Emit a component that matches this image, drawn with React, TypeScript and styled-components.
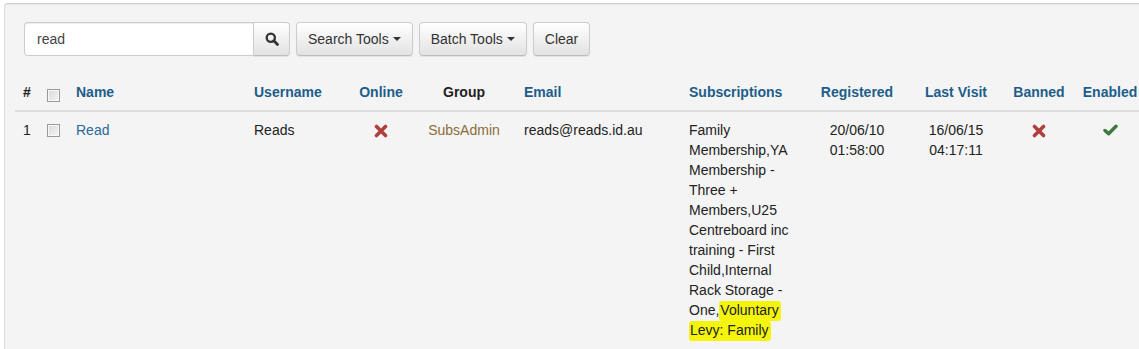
import React from "react";
import styled, { createGlobalStyle } from "styled-components";

const Global = createGlobalStyle`
  html, body { margin: 0; padding: 0; overflow: hidden; background: #fff; }
  body { font-family: "Liberation Sans", Arial, sans-serif; font-size: 14px; line-height: 20px; color: #222; }
`;

const Well = styled.div`
  margin: 3px -40px 0 4px;
  min-height: 400px;
  background: #f4f4f4;
  border: 1px solid #dadada;
  border-top-color: #cdcdcd;
  border-radius: 4px;
  box-shadow: inset 0 1px 1px rgba(0, 0, 0, 0.05);
  padding: 18px 0 0 10px;
`;

const Toolbar = styled.div`
  display: flex;
  align-items: stretch;
  gap: 6px;
  margin: 0 0 18px 9px;
  height: 34px;
`;

const InputGroup = styled.div`
  display: flex;
  height: 34px;
`;

const SearchInput = styled.input`
  box-sizing: border-box;
  width: 229px;
  height: 34px;
  padding: 6px 12px;
  border: 1px solid #ccc;
  border-right: none;
  border-radius: 4px 0 0 4px;
  background: #fff;
  font: inherit;
  color: #444;
  box-shadow: inset 0 1px 1px rgba(0, 0, 0, 0.075);
  outline: none;
`;

const Btn = styled.button<{ $attached?: boolean }>`
  box-sizing: border-box;
  flex-shrink: 0;
  height: 34px;
  display: flex;
  align-items: center;
  justify-content: center;
  gap: 4px;
  padding: ${(p) => (p.$attached ? "0" : "6px 11px")};
  font: inherit;
  color: #333;
  background: linear-gradient(to bottom, #ffffff 0%, #e2e2e2 100%);
  border: 1px solid #ccc;
  border-bottom-color: #bdbdbd;
  border-radius: ${(p) => (p.$attached ? "0 4px 4px 0" : "4px")};
  box-shadow: inset 0 1px 0 rgba(255, 255, 255, 0.15), 0 1px 1px rgba(0, 0, 0, 0.075);
  width: ${(p) => (p.$attached ? "37px" : "auto")};
  cursor: pointer;
`;

const Caret = styled.span`
  display: inline-block;
  width: 0;
  height: 0;
  border-top: 4px solid #333;
  border-left: 4px solid transparent;
  border-right: 4px solid transparent;
`;

const Table = styled.table`
  border-collapse: collapse;
  table-layout: fixed;
  width: 1135px;
`;

const Th = styled.th<{ $w: number; $center?: boolean; $plain?: boolean; $tight?: boolean }>`
  width: ${(p) => p.$w}px;
  box-sizing: border-box;
  padding: ${(p) => (p.$tight ? "8px 2px" : "8px")};
  text-align: ${(p) => (p.$center ? "center" : "left")};
  font-weight: bold;
  color: ${(p) => (p.$plain ? "#222" : "#1d5d8a")};
  border-bottom: 2px solid #dddddd;
  vertical-align: bottom;
  white-space: nowrap;
`;

const Td = styled.td<{ $center?: boolean; $tight?: boolean }>`
  padding: ${(p) => (p.$tight ? "8px 2px" : "8px")};
  text-align: ${(p) => (p.$center ? "center" : "left")};
  vertical-align: top;
`;

const Check = styled.input.attrs({ type: "checkbox" })`
  appearance: none;
  display: block;
  box-sizing: border-box;
  width: 13px;
  height: 13px;
  margin: 4px 0 0;
  border: 1px solid #9a9a9a;
  background: linear-gradient(135deg, #d9d9d9 0%, #f4f4f4 100%);
  box-shadow: inset 0 0 0 1px #f8f8f8;
`;

const NameLink = styled.a`
  color: #2b6a98;
  text-decoration: none;
`;

const GroupText = styled.span`
  color: #8a6d3b;
`;

const Highlight = styled.span`
  background: #f4f40c;
  padding: 1px 2px 3px 1px;
  border-radius: 3px;
  box-decoration-break: clone;
  -webkit-box-decoration-break: clone;
`;

const Icon = styled.svg`
  display: block;
  margin: 4px auto 0;
`;

const Cross = () => (
  <Icon width="14" height="14" viewBox="0 0 14 14">
    <path d="M2.5 2.5 L11.5 11.5 M11.5 2.5 L2.5 11.5" stroke="#b0403e" strokeWidth="3.6" strokeLinecap="round" fill="none" />
  </Icon>
);

const Tick = () => (
  <Icon width="15" height="12" viewBox="0 0 15 12">
    <path d="M2 6.5 L5.6 9.8 L13 2.2" stroke="#3d7a3c" strokeWidth="3.4" strokeLinecap="round" strokeLinejoin="round" fill="none" />
  </Icon>
);

const SearchSvg = styled.svg`
  flex-shrink: 0;
  display: block;
`;

const SearchGlyph = () => (
  <SearchSvg width="14" height="14" viewBox="0 0 14 14">
    <circle cx="5.8" cy="5.8" r="4.1" stroke="#333" strokeWidth="2.3" fill="none" />
    <path d="M8.8 8.8 L12.5 12.5" stroke="#333" strokeWidth="2.8" strokeLinecap="round" />
  </SearchSvg>
);

export default function App() {
  return (
    <>
      <Global />
      <Well>
        <Toolbar>
          <InputGroup>
            <SearchInput defaultValue="read" />
            <Btn $attached aria-label="Search">
              <SearchGlyph />
            </Btn>
          </InputGroup>
          <Btn>
            Search Tools <Caret />
          </Btn>
          <Btn>
            Batch Tools <Caret />
          </Btn>
          <Btn>Clear</Btn>
        </Toolbar>
        <Table>
          <thead>
            <tr>
              <Th $w={24} $plain>#</Th>
              <Th $w={29}>
                <Check />
              </Th>
              <Th $w={178}>Name</Th>
              <Th $w={104}>Username</Th>
              <Th $w={62} $center $tight>Online</Th>
              <Th $w={104} $center $plain>Group</Th>
              <Th $w={165}>Email</Th>
              <Th $w={129}>Subscriptions</Th>
              <Th $w={94} $center $tight>Registered</Th>
              <Th $w={104} $center>Last Visit</Th>
              <Th $w={62} $center $tight>Banned</Th>
              <Th $w={80} $center $tight>Enabled</Th>
            </tr>
          </thead>
          <tbody>
            <tr>
              <Td>1</Td>
              <Td>
                <Check />
              </Td>
              <Td>
                <NameLink href="#">Read</NameLink>
              </Td>
              <Td>Reads</Td>
              <Td $center $tight>
                <Cross />
              </Td>
              <Td $center>
                <GroupText>SubsAdmin</GroupText>
              </Td>
              <Td>reads@reads.id.au</Td>
              <Td>
                Family Membership,YA Membership - Three + Members,U25 Centreboard inc training - First Child,Internal Rack
                Storage - One,<Highlight>Voluntary Levy: Family</Highlight>
              </Td>
              <Td $center $tight>
                20/06/10 01:58:00
              </Td>
              <Td $center>16/06/15 04:17:11</Td>
              <Td $center $tight>
                <Cross />
              </Td>
              <Td $center $tight>
                <Tick />
              </Td>
            </tr>
          </tbody>
        </Table>
      </Well>
    </>
  );
}
